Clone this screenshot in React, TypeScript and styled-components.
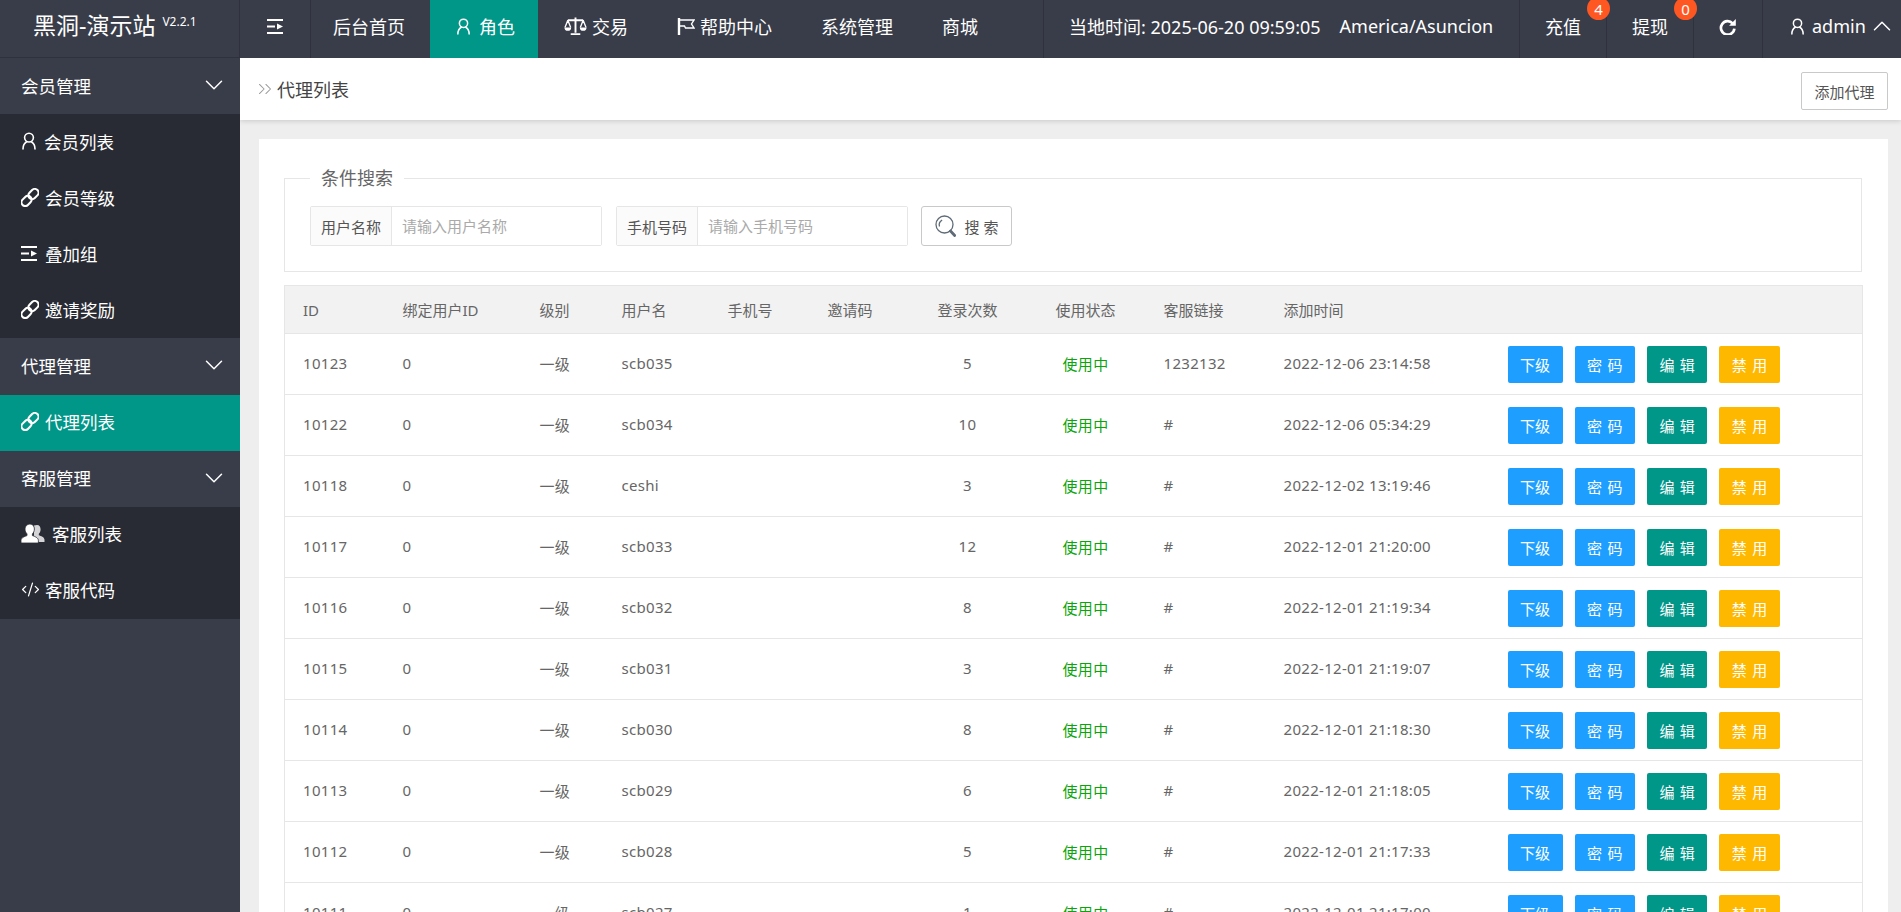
import styled, { createGlobalStyle } from "styled-components";
import { ChevronDown, ChevronUp, ChevronsRight, CodeXml } from "lucide-react";

const FONT = `"Noto Sans", "Noto Sans CJK SC", "Liberation Sans", sans-serif`;

const GlobalStyle = createGlobalStyle`
    html, body { margin: 0; padding: 0; height: 100%; overflow: hidden; background: #eee; }
    body { font-family: ${FONT}; }
    * { box-sizing: border-box; }
`;

/* ---------- icons ---------- */

const UserIcon = ({ size = 16 }: { size?: number }) => (
    <svg width={size} height={size + 2} viewBox="0 0 16 18" fill="none" stroke="currentColor" strokeWidth="1.6" strokeLinecap="round">
        <circle cx="8" cy="5.6" r="4.4" />
        <path d="M2 17c0-3.6 1.6-6 3.6-7.2M14 17c0-3.6-1.6-6-3.6-7.2" />
    </svg>
);

const ShrinkIcon = () => (
    <svg width="16" height="15" viewBox="0 0 16 15" fill="currentColor">
        <rect x="0" y="0" width="16" height="2" />
        <rect x="0" y="6.5" width="8" height="2" />
        <polygon points="10,4.5 16,7.5 10,10.5" />
        <rect x="0" y="13" width="16" height="2" />
    </svg>
);

const LinkIcon = () => (
    <svg width="18" height="19" viewBox="0 0 24 24" fill="none" stroke="currentColor" strokeWidth="2.8">
        <g transform="rotate(-45 12 12)">
            <rect x="-2" y="7" width="15" height="10" rx="5" />
            <rect x="11" y="7" width="15" height="10" rx="5" />
        </g>
    </svg>
);

const UsersIcon = () => (
    <svg width="24" height="19" viewBox="0 0 24 19" fill="currentColor">
        <path d="M16 1c2.4 0 3.6 2 3.6 4.4 0 1.800-.8 3.400-1.800 4.400v1.400c2 .8 5.700 1.800 5.700 4.600V18H13V1.500c1-.3 2-.5 3-.5z" opacity=".8" />
        <path d="M9 0c2.800 0 4.400 2.200 4.400 5 0 2-.9 3.800-2 4.900v1.700c2.400.9 6 2 6 5V19H0v-2.400c0-3 3.600-4.100 6-5V9.900C4.900 8.800 4 7 4 5c0-2.800 2.200-5 5-5z" stroke="#282B33" strokeWidth=".8" />
    </svg>
);

const ScaleIcon = () => (
    <svg width="23" height="20" viewBox="0 0 24 20" fill="none" stroke="currentColor" strokeWidth="1.4">
        <path d="M12 1v16M7 18.500h10M4 4h16" strokeWidth="2" />
        <path d="M4 4 1 11.500M4 4l3 7.500M20 4l-3 7.500M20 4l3 7.500" />
        <path d="M.5 11.500h7a3.500 3.500 0 0 1-7 0zM16.500 11.500h7a3.500 3.500 0 0 1-7 0z" fill="currentColor" stroke="none" />
    </svg>
);

const FlagIcon = () => (
    <svg width="18" height="19" viewBox="0 0 18 19" fill="none" stroke="currentColor" strokeWidth="1.4">
        <path d="M2 1v17" strokeWidth="2.400" />
        <path d="M3 3h14l-2.500 4 2.500 4H8.500L7.500 9H3" />
    </svg>
);

const RefreshIcon = () => (
    <svg width="18" height="17" viewBox="0 0 24 24" fill="none" stroke="currentColor" strokeWidth="3.800">
        <path d="M18.500 7.500A9.500 9.500 0 1 0 21 15" />
        <polygon points="23,1.500 23,11 13.500,11" fill="currentColor" stroke="none" />
    </svg>
);

const SearchIcon = () => (
    <svg width="21" height="22" viewBox="0 0 21 22" fill="none" stroke="#5f6b76" strokeWidth="1.300">
        <circle cx="9.500" cy="9.500" r="8.500" />
        <path d="M4.500 11.500c-.8-2.600.2-5 2.600-6.400" />
        <path d="M15.500 16l4.200 4.500" strokeWidth="2.800" strokeLinecap="round" />
    </svg>
);

const MenuChevron = () => <ChevronDown size={30} strokeWidth={1.2} />;

/* ---------- layout ---------- */

const Page = styled.div`
    display: flex;
    flex-direction: column;
    height: 100vh;
    overflow: hidden;
`;

const TopBar = styled.header`
    display: flex;
    flex: 0 0 58px;
    background: #393d49;
    color: #fff;
    font-size: 18px;
`;

const Logo = styled.div`
    display: flex;
    align-items: flex-start;
    width: 240px;
    height: 58px;
    padding: 11px 0 0 33px;
    border-right: 1px solid #2f323c;
    border-bottom: 1px solid #2f323c;
    font-size: 23px;
    line-height: 29px;
    white-space: nowrap;
`;

const Version = styled.span`
    margin: 1px 0 0 7px;
    font-size: 12px;
    line-height: 20px;
`;

const BarCell = styled.div<{ $width?: number }>`
    position: relative;
    display: flex;
    align-items: center;
    justify-content: center;
    width: ${(p) => (p.$width ? `${p.$width}px` : "auto")};
    height: 58px;
    padding-bottom: 6px;
    border-left: 1px solid #2f323c;
`;

const ToggleCell = styled(BarCell)`
    border-left: 0;
`;

const NavList = styled.nav`
    display: flex;
    border-left: 1px solid #2f323c;
`;

const NavItem = styled.a<{ $active?: boolean; $gap?: number }>`
    display: flex;
    align-items: center;
    gap: ${(p) => p.$gap ?? 5}px;
    height: 58px;
    padding: 0 23px 6px 26px;
    background: ${(p) => (p.$active ? "#009688" : "transparent")};
    color: #fff;
    white-space: nowrap;

    &:first-child {
        padding: 0 25px 6px 22px;
    }
`;

const BarRight = styled.div`
    display: flex;
    margin-left: auto;
`;

const ClockCell = styled(BarCell)`
    justify-content: flex-start;
    gap: 19px;
    width: 476px;
    padding-left: 25px;
    white-space: nowrap;
`;

const Badge = styled.span`
    position: absolute;
    top: -3px;
    right: -4px;
    display: flex;
    align-items: center;
    justify-content: center;
    width: 23px;
    height: 23px;
    border-radius: 50%;
    background: #ff5722;
    font-size: 15px;
    z-index: 2;
`;

const UserCell = styled(BarCell)`
    justify-content: flex-start;
    gap: 7px;
    padding-left: 27px;
`;

const UserChevron = styled(ChevronUp)`
    flex: none;
    margin-left: -6px;
`;

const Body = styled.div`
    display: flex;
    flex: 1;
    min-height: 0;
`;

const Sidebar = styled.aside`
    flex: 0 0 240px;
    background: #393d49;
    color: #fff;
    font-size: 17.500px;
`;

const MenuGroup = styled.div`
    display: flex;
    align-items: center;
    justify-content: space-between;
    height: 56.300px;
    padding: 0 11px 2px 21px;
`;

const MenuItem = styled.a<{ $active?: boolean; $gap?: number }>`
    display: flex;
    align-items: center;
    gap: ${(p) => p.$gap ?? 6}px;
    height: 56px;
    padding: 0 0 2px 21px;
    background: ${(p) => (p.$active ? "#009688" : "#282b33")};
    color: #fff;
`;

const Main = styled.main`
    display: flex;
    flex: 1;
    flex-direction: column;
    min-width: 0;
    overflow: hidden;
`;

const TitleBar = styled.div`
    display: flex;
    flex: 0 0 62px;
    align-items: center;
    padding: 0 13px 0 14px;
    background: #fff;
    box-shadow: 0 1px 5px rgba(0, 0, 0, 0.16);
    color: #444;
    font-size: 18px;
    z-index: 1;
`;

const TitleText = styled.span`
    margin-left: 1px;
`;

const OutlineButton = styled.button`
    display: flex;
    align-items: center;
    justify-content: center;
    height: 38px;
    padding: 0;
    border: 1px solid #c9c9c9;
    border-radius: 2px;
    background: #fff;
    color: #555;
    font: 15px ${FONT};
`;

const AddButton = styled(OutlineButton)`
    width: 87px;
    margin: 4px 0 0 auto;
`;

const Card = styled.section`
    flex: 1;
    margin: 19px 13px 0 19px;
    padding: 27px 26px 0 25px;
    background: #fff;
`;

const SearchBox = styled.fieldset`
    display: flex;
    margin: 0;
    padding: 16px 25px 25px 25px;
    border: 1px solid #e6e6e6;
`;

const SearchLegend = styled.legend`
    padding: 0 11px;
    color: #666;
    font-size: 18px;
    line-height: 24px;
`;

const SearchRow = styled.div`
    display: flex;
    gap: 14px;
`;

const InputGroup = styled.label`
    display: flex;
    width: 292px;
    height: 40px;
    border: 1px solid #e6e6e6;
    border-radius: 2px;
`;

const InputLabel = styled.span`
    display: flex;
    flex: 0 0 81px;
    align-items: center;
    justify-content: center;
    border-right: 1px solid #e6e6e6;
    background: #fbfbfb;
    color: #555;
    font-size: 15px;
`;

const TextInput = styled.input`
    flex: 1;
    min-width: 0;
    padding: 0 10px;
    border: 0;
    outline: 0;
    font: 15px ${FONT};

    &::placeholder {
        color: #aaa;
    }
`;

const SearchButton = styled(OutlineButton)`
    gap: 9px;
    width: 91px;
    height: 40px;
    margin-left: -1px;
    border-radius: 3px;
`;

const Table = styled.table`
    width: 100%;
    margin-top: 13px;
    border: 1px solid #e6e6e6;
    border-collapse: collapse;
    table-layout: fixed;
    color: #666;
    font-size: 15px;
`;

const HeadRow = styled.tr`
    height: 48px;
    background: #f2f2f2;
`;

const Row = styled.tr`
    height: 61px;
    border-top: 1px solid #e6e6e6;
`;

const HeadCell = styled.th<{ $center?: boolean }>`
    padding: 0 0 0 ${(p) => (p.$center ? 0 : 20)}px;
    border: 0;
    font-weight: 400;
    text-align: ${(p) => (p.$center ? "center" : "left")};

    &:first-child {
        padding-left: 18px;
    }
`;

const Cell = styled.td<{ $center?: boolean }>`
    padding: 0 0 2px ${(p) => (p.$center ? 0 : 20)}px;
    text-align: ${(p) => (p.$center ? "center" : "left")};
    letter-spacing: 0.3px;
    white-space: nowrap;

    &:first-child {
        padding-left: 18px;
    }
`;

const Status = styled(Cell)`
    color: #0aa50a;
`;

const ActionCell = styled.td`
    padding: 0 0 0 20px;
`;

const Actions = styled.div`
    display: flex;
    gap: 12px;
`;

const ActionButton = styled.button<{ $color: string }>`
    height: 37px;
    padding: 0 12.500px;
    border: 0;
    border-radius: 2px;
    background: ${(p) => p.$color};
    color: #fff;
    font: 15px ${FONT};
    word-spacing: 1.500px;
    white-space: nowrap;
`;

/* ---------- data ---------- */

const COLUMNS = [
    { title: "ID", width: 98 },
    { title: "绑定用户ID", width: 137 },
    { title: "级别", width: 82 },
    { title: "用户名", width: 106 },
    { title: "手机号", width: 100 },
    { title: "邀请码", width: 100 },
    { title: "登录次数", width: 120, center: true },
    { title: "使用状态", width: 116, center: true },
    { title: "客服链接", width: 120 },
    { title: "添加时间", width: 224 },
    { title: "", width: 375 },
];

const ROWS = [
    ["10123", "scb035", "5", "1232132", "2022-12-06 23:14:58"],
    ["10122", "scb034", "10", "#", "2022-12-06 05:34:29"],
    ["10118", "ceshi", "3", "#", "2022-12-02 13:19:46"],
    ["10117", "scb033", "12", "#", "2022-12-01 21:20:00"],
    ["10116", "scb032", "8", "#", "2022-12-01 21:19:34"],
    ["10115", "scb031", "3", "#", "2022-12-01 21:19:07"],
    ["10114", "scb030", "8", "#", "2022-12-01 21:18:30"],
    ["10113", "scb029", "6", "#", "2022-12-01 21:18:05"],
    ["10112", "scb028", "5", "#", "2022-12-01 21:17:33"],
    ["10111", "scb027", "1", "#", "2022-12-01 21:17:00"],
];

export default function App() {
    return (
        <Page>
            <GlobalStyle />
            <TopBar>
                <Logo>
                    黑洞-演示站
                    <Version>V2.2.1</Version>
                </Logo>
                <ToggleCell $width={70}>
                    <ShrinkIcon />
                </ToggleCell>
                <NavList>
                    <NavItem>后台首页</NavItem>
                    <NavItem $active $gap={8}>
                        <UserIcon size={15} />
                        角色
                    </NavItem>
                    <NavItem>
                        <ScaleIcon />
                        交易
                    </NavItem>
                    <NavItem>
                        <FlagIcon />
                        帮助中心
                    </NavItem>
                    <NavItem>系统管理</NavItem>
                    <NavItem>商城</NavItem>
                </NavList>
                <BarRight>
                    <ClockCell>
                        <span>当地时间: 2025-06-20 09:59:05</span>
                        <span>America/Asuncion</span>
                    </ClockCell>
                    <BarCell $width={87}>
                        充值
                        <Badge>4</Badge>
                    </BarCell>
                    <BarCell $width={87}>
                        提现
                        <Badge>0</Badge>
                    </BarCell>
                    <BarCell $width={69}>
                        <RefreshIcon />
                    </BarCell>
                    <UserCell $width={139}>
                        <UserIcon size={15} />
                        admin
                        <UserChevron size={30} strokeWidth={1.2} />
                    </UserCell>
                </BarRight>
            </TopBar>
            <Body>
                <Sidebar>
                    <MenuGroup>
                        会员管理
                        <MenuChevron />
                    </MenuGroup>
                    <MenuItem $gap={7}>
                        <UserIcon size={16} />
                        会员列表
                    </MenuItem>
                    <MenuItem>
                        <LinkIcon />
                        会员等级
                    </MenuItem>
                    <MenuItem $gap={8}>
                        <ShrinkIcon />
                        叠加组
                    </MenuItem>
                    <MenuItem>
                        <LinkIcon />
                        邀请奖励
                    </MenuItem>
                    <MenuGroup>
                        代理管理
                        <MenuChevron />
                    </MenuGroup>
                    <MenuItem $active>
                        <LinkIcon />
                        代理列表
                    </MenuItem>
                    <MenuGroup>
                        客服管理
                        <MenuChevron />
                    </MenuGroup>
                    <MenuItem $gap={7}>
                        <UsersIcon />
                        客服列表
                    </MenuItem>
                    <MenuItem $gap={5}>
                        <CodeXml size={19} strokeWidth={1.6} />
                        客服代码
                    </MenuItem>
                </Sidebar>
                <Main>
                    <TitleBar>
                        <ChevronsRight size={22} strokeWidth={1.1} color="#999" />
                        <TitleText>代理列表</TitleText>
                        <AddButton>添加代理</AddButton>
                    </TitleBar>
                    <Card>
                        <SearchBox>
                            <SearchLegend>条件搜索</SearchLegend>
                            <SearchRow>
                                <InputGroup>
                                    <InputLabel>用户名称</InputLabel>
                                    <TextInput placeholder="请输入用户名称" />
                                </InputGroup>
                                <InputGroup>
                                    <InputLabel>手机号码</InputLabel>
                                    <TextInput placeholder="请输入手机号码" />
                                </InputGroup>
                                <SearchButton>
                                    <SearchIcon />
                                    搜 索
                                </SearchButton>
                            </SearchRow>
                        </SearchBox>
                        <Table>
                            <colgroup>
                                {COLUMNS.map((c, i) => (
                                    <col key={i} width={c.width} />
                                ))}
                            </colgroup>
                            <thead>
                                <HeadRow>
                                    {COLUMNS.map((c, i) => (
                                        <HeadCell key={i} $center={c.center}>
                                            {c.title}
                                        </HeadCell>
                                    ))}
                                </HeadRow>
                            </thead>
                            <tbody>
                                {ROWS.map(([id, name, logins, link, time]) => (
                                    <Row key={id}>
                                        <Cell>{id}</Cell>
                                        <Cell>0</Cell>
                                        <Cell>一级</Cell>
                                        <Cell>{name}</Cell>
                                        <Cell />
                                        <Cell />
                                        <Cell $center>{logins}</Cell>
                                        <Status $center>使用中</Status>
                                        <Cell>{link}</Cell>
                                        <Cell>{time}</Cell>
                                        <ActionCell>
                                            <Actions>
                                                <ActionButton $color="#1e9fff">下级</ActionButton>
                                                <ActionButton $color="#1e9fff">密 码</ActionButton>
                                                <ActionButton $color="#009688">编 辑</ActionButton>
                                                <ActionButton $color="#ffb800">禁 用</ActionButton>
                                            </Actions>
                                        </ActionCell>
                                    </Row>
                                ))}
                            </tbody>
                        </Table>
                    </Card>
                </Main>
            </Body>
        </Page>
    );
}
